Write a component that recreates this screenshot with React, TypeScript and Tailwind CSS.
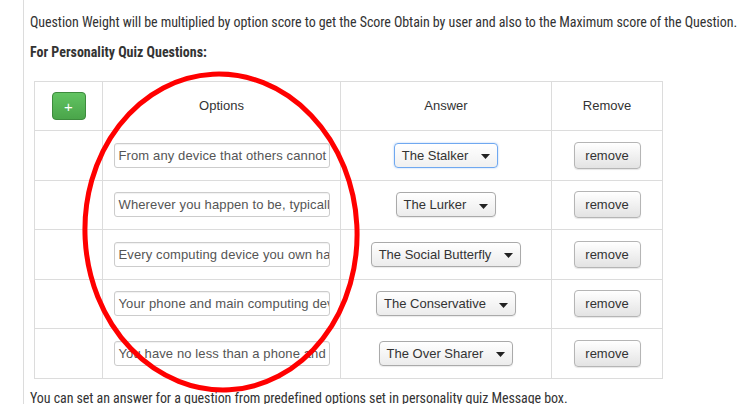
import React from "react";

const rows = [
  { opt: "From any device that others cannot", ans: "The Stalker", focus: true },
  { opt: "Wherever you happen to be, typically", ans: "The Lurker" },
  { opt: "Every computing device you own has", ans: "The Social Butterfly" },
  { opt: "Your phone and main computing devices", ans: "The Conservative" },
  { opt: "You have no less than a phone and tablet", ans: "The Over Sharer" },
];

const textFont = { fontFamily: '"Roboto Condensed", "Liberation Sans", sans-serif' };

function Caret() {
  return (
    <svg width="9" height="5" viewBox="0 0 9 5" className="ml-[13px] mt-[3px] shrink-0">
      <path d="M0 0 H9 L4.5 5 Z" fill="#222" />
    </svg>
  );
}

export default function App() {
  return (
    <div className="relative w-[740px] h-[404px] overflow-hidden bg-white">
      <div className="ml-[23px] h-full border-l border-[#dcdcdc] pl-[6px] pt-[12px]">
        <p className="text-[14px] leading-[20px] text-[#333] whitespace-nowrap tracking-[-0.07px]" style={textFont}>
          Question Weight will be multiplied by option score to get the Score Obtain by user and also to the Maximum score of the Question.
        </p>
        <p className="mt-[10px] text-[14px] leading-[20px] font-bold text-[#333]" style={textFont}>
          For Personality Quiz Questions:
        </p>
        <table className="ml-[4px] mt-[19px] w-[628px] border-collapse table-fixed" style={{ fontFamily: '"Liberation Sans", Arial, sans-serif' }}>
          <colgroup>
            <col className="w-[68px]" />
            <col className="w-[238px]" />
            <col className="w-[211px]" />
            <col className="w-[111px]" />
          </colgroup>
          <thead>
            <tr className="h-[49px]">
              <th className="border border-[#dcdcdc] p-0 font-normal">
                <div className="flex justify-center">
                  <button className="w-[34px] h-[28px] rounded-[4px] border border-[#3d8b3d] bg-gradient-to-b from-[#62c462] to-[#4aa54a] text-white text-[15px] leading-none flex items-center justify-center">
                    +
                  </button>
                </div>
              </th>
              <th className="border border-[#dcdcdc] text-[13px] font-normal text-[#333]">Options</th>
              <th className="border border-[#dcdcdc] text-[13px] font-normal text-[#333]">Answer</th>
              <th className="border border-[#dcdcdc] text-[13px] font-normal text-[#333]">Remove</th>
            </tr>
          </thead>
          <tbody>
            {rows.map((r, i) => (
              <tr key={i} className="h-[49.5px]">
                <td className="border border-[#dcdcdc]" />
                <td className="border border-[#dcdcdc] px-0">
                  <div className="flex justify-center">
                    <div className="w-[216px] h-[25px] border border-[#cccccc] rounded-[3px] bg-white px-[4px] flex items-center overflow-hidden whitespace-nowrap text-[13px] tracking-[0.12px] text-[#555] shadow-[inset_0_1px_1px_rgba(0,0,0,0.06)]">
                      {r.opt}
                    </div>
                  </div>
                </td>
                <td className="border border-[#dcdcdc]">
                  <div className="flex justify-center">
                    <div
                      className={
                        r.focus
                          ? "h-[25px] px-[7px] flex items-center rounded-[4px] border border-[#6fa8f0] bg-gradient-to-b from-white to-[#f0f0f0] text-[13px] text-[#333] shadow-[0_0_2px_rgba(80,150,240,0.5)]"
                          : "h-[25px] px-[7px] flex items-center rounded-[4px] border border-[#aaaaaa] bg-gradient-to-b from-white to-[#ececec] text-[13px] text-[#333] shadow-[0_1px_1px_rgba(0,0,0,0.08)]"
                      }
                    >
                      <span>{r.ans}</span>
                      <Caret />
                    </div>
                  </div>
                </td>
                <td className="border border-[#dcdcdc]">
                  <div className="flex justify-center">
                    <button className="w-[67px] h-[27px] rounded-[4px] border border-[#b5b5b5] bg-gradient-to-b from-white to-[#e3e3e3] text-[13px] text-[#333] shadow-[0_1px_1px_rgba(0,0,0,0.1)]">
                      remove
                    </button>
                  </div>
                </td>
              </tr>
            ))}
          </tbody>
        </table>
        <p className="mt-[9px] text-[14px] leading-[20px] text-[#333] whitespace-nowrap tracking-[-0.07px]" style={textFont}>
          You can set an answer for a question from predefined options set in personality quiz Message box.
        </p>
      </div>
      <svg className="absolute left-0 top-0 pointer-events-none" width="740" height="404">
        <ellipse cx="221" cy="232" rx="136" ry="158" fill="none" stroke="#ff0000" strokeWidth="5" transform="rotate(-3 221 232)" />
      </svg>
    </div>
  );
}
